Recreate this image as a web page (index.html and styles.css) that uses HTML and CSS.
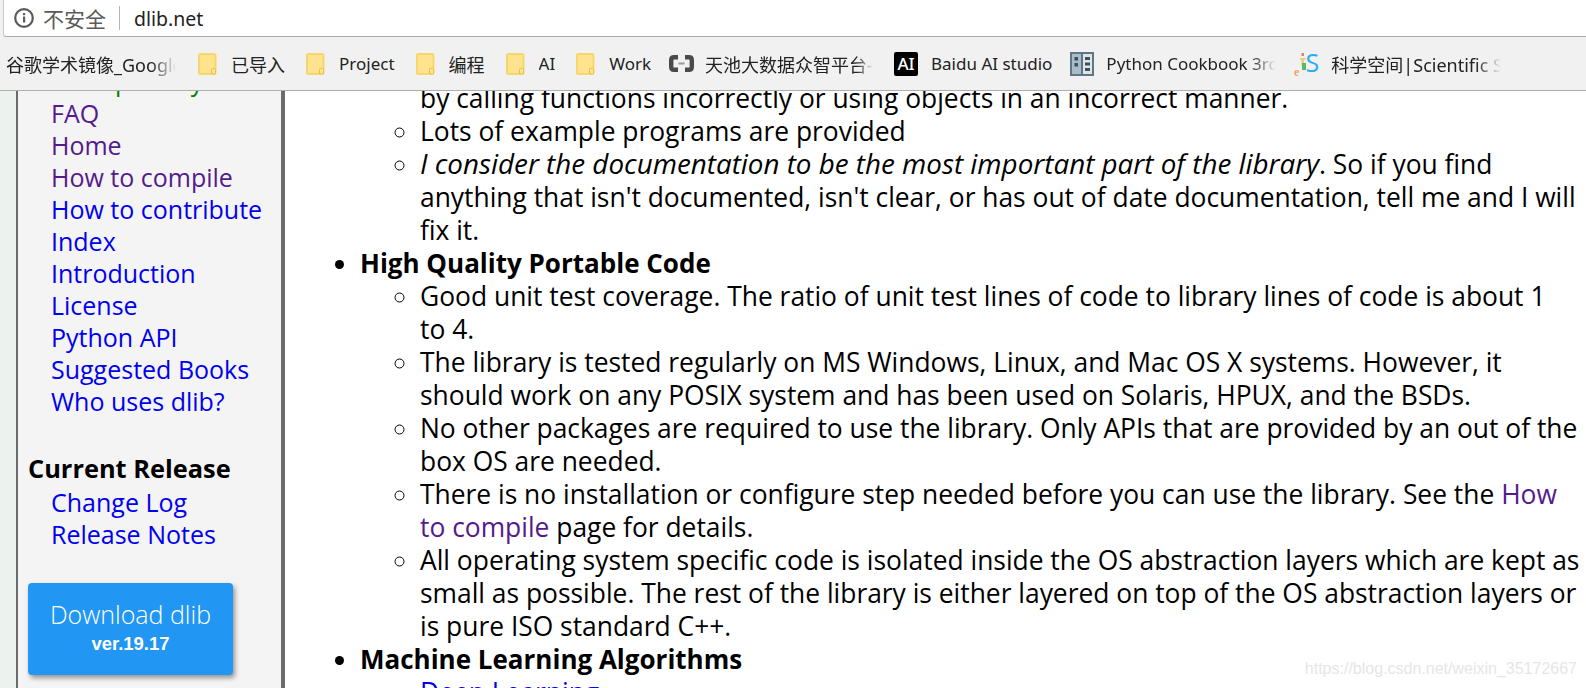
FILE: index.html
```html
<!DOCTYPE html>
<html lang="en">
<head>
<meta charset="utf-8">
<title>dlib C++ Library</title>
<link rel="stylesheet" href="styles.css">
</head>
<body>
<header class="chrome">
  <div class="addressbar">
    <svg class="info" width="20" height="20" viewBox="0 0 20 20"><circle cx="10" cy="10" r="8.8" fill="none" stroke="#5a5a5a" stroke-width="2.2"/><rect x="9" y="8.500" width="2.200" height="6" fill="#5a5a5a"/><rect x="9" y="5" width="2.200" height="2.200" fill="#5a5a5a"/></svg>
    <span class="insecure">不安全</span>
    <span class="sep"></span>
    <span class="url">dlib.net</span>
  </div>
  <nav class="bookmarks">
    <span class="bm bm-first"><span class="bm-text cjk w170">谷歌学术镜像_Google</span></span>
    <span class="bm"><svg class="folder" width="19" height="22" viewBox="0 0 19 22"><use href="#fld"/></svg><span class="bm-text cjk">已导入</span></span>
    <span class="bm"><svg class="folder" width="19" height="22" viewBox="0 0 19 22"><use href="#fld"/></svg><span class="bm-text">Project</span></span>
    <span class="bm"><svg class="folder" width="19" height="22" viewBox="0 0 19 22"><use href="#fld"/></svg><span class="bm-text cjk">编程</span></span>
    <span class="bm"><svg class="folder" width="19" height="22" viewBox="0 0 19 22"><use href="#fld"/></svg><span class="bm-text">AI</span></span>
    <span class="bm bm-tight"><svg class="folder" width="19" height="22" viewBox="0 0 19 22"><use href="#fld"/></svg><span class="bm-text">Work</span></span>
    <span class="bm"><svg class="fav fav-tc" width="25" height="17" viewBox="0 0 25 17"><path d="M9 2.200H5Q2.200 2.200 2.200 5V12Q2.200 14.800 5 14.800H9M16 2.200H20Q22.800 2.200 22.800 5V12Q22.800 14.800 20 14.800H16" fill="none" stroke="#4a4a4a" stroke-width="4.400"/><rect x="9.500" y="7.500" width="6" height="2" fill="#9a9a9a"/></svg><span class="bm-text cjk w168">天池大数据众智平台-</span></span>
    <span class="bm bm-tight"><span class="ai-logo">AI</span><span class="bm-text">Baidu AI studio</span></span>
    <span class="bm bm-tight"><svg class="fav" width="24" height="24" viewBox="0 0 24 24"><rect width="24" height="24" fill="#5f7684"/><rect x="2" y="2" width="9" height="20" fill="#a9bcc7"/><rect x="13" y="2" width="9" height="20" fill="#dfe6ea"/><rect x="4.500" y="5" width="3.500" height="3.500" fill="#3f4f5a"/><rect x="4.500" y="11" width="3.500" height="3.500" fill="#3f4f5a"/><rect x="15" y="5" width="5" height="3" fill="#3f4f5a"/><rect x="15" y="10.500" width="5" height="3" fill="#3f4f5a"/><rect x="15" y="16" width="5" height="3" fill="#3f4f5a"/></svg><span class="bm-text w170">Python Cookbook 3rd</span></span>
    <span class="bm"><svg class="fav" width="25" height="24" viewBox="0 0 25 24"><rect x="7.500" y="1" width="2.500" height="3" fill="#e0807a"/><rect x="6" y="6" width="5.500" height="2" fill="#e8cf7c"/><rect x="7.500" y="8" width="2.500" height="6" fill="#e8cf7c"/><rect x="8" y="11" width="4" height="7" fill="#5cb85c"/><text x="11.500" y="19.500" class="js-s">S</text><text x="0" y="23.500" class="js-e">e</text></svg><span class="bm-text cjk w170">科学空间|Scientific Spaces</span></span>
  </nav>
</header>

<div class="page">
  <aside class="sidebar">
    <div class="side-scroll">
      <ul class="side-list">
        <li><a href="#">Examples: C++</a></li>
        <li><a class="green" href="#">Examples: Python</a></li>
        <li><a class="visited" href="#">FAQ</a></li>
        <li><a class="visited" href="#">Home</a></li>
        <li><a class="visited" href="#">How to compile</a></li>
        <li><a href="#">How to contribute</a></li>
        <li><a href="#">Index</a></li>
        <li><a href="#">Introduction</a></li>
        <li><a href="#">License</a></li>
        <li><a href="#">Python API</a></li>
        <li><a href="#">Suggested Books</a></li>
        <li><a href="#">Who uses dlib?</a></li>
      </ul>
      <h3 class="side-head">Current Release</h3>
      <ul class="side-list">
        <li><a href="#">Change Log</a></li>
        <li><a href="#">Release Notes</a></li>
      </ul>
      <a class="download" href="#"><span class="dl-main">Download dlib</span><span class="dl-ver">ver.19.17</span></a>
    </div>
  </aside>
  <main class="content">
    <ul class="outer">
      <li class="section-tail">
        <ul class="inner">
          <li>The library is easy to debug. Assertions are used to catch errors caused<br>by calling functions incorrectly or using objects in an incorrect manner.</li>
          <li>Lots of example programs are provided</li>
          <li><em>I consider the documentation to be the most important part of the library</em>. So if you find anything that isn't documented, isn't clear, or has out of date documentation, tell me and I will fix it.</li>
        </ul>
      </li>
      <li><b>High Quality Portable Code</b>
        <ul class="inner">
          <li>Good unit test coverage. The ratio of unit test lines of code to library lines of code is about 1 to&nbsp;4.</li>
          <li>The library is tested regularly on MS Windows, Linux, and Mac OS X systems. However, it should work on any POSIX system and has been used on Solaris, HPUX, and the BSDs.</li>
          <li>No other packages are required to use the library. Only APIs that are provided by an out of the box OS are needed.</li>
          <li>There is no installation or configure step needed before you can use the library. See the <a class="visited" href="#">How to compile</a> page for details.</li>
          <li>All operating system specific code is isolated inside the OS abstraction layers which are kept as small as possible. The rest of the library is either layered on top of the OS abstraction layers or is pure ISO standard C++.</li>
        </ul>
      </li>
      <li><b>Machine Learning Algorithms</b>
        <ul class="inner">
          <li><a href="#">Deep Learning</a></li>
        </ul>
      </li>
    </ul>
  </main>
</div>
<div class="watermark">https://blog.csdn.net/weixin_35172667</div>
<svg class="defs" width="0" height="0"><symbol id="fld" viewBox="0 0 19 22"><rect x="1" y="1" width="16.500" height="20" rx="1.500" fill="#ffe38f" stroke="#f7d76c" stroke-width="2"/><rect x="13.500" y="15.500" width="4" height="5.500" rx="1" fill="#ffe38f" stroke="#e6c04f" stroke-width="1"/></symbol></svg>
</body>
</html>
```
FILE: styles.css
```css
* { box-sizing: border-box; }
html, body { margin: 0; padding: 0; height: 688px; overflow: hidden; background: #ecf3ee; }
body { font-family: "Open Sans", "Noto Sans CJK SC", sans-serif; color: #000; position: relative; }
a { color: #0000ee; text-decoration: none; }
a.visited { color: #551a8b; }
a.green { color: #008000; }
.defs { position: absolute; }

.chrome { height: 91px; background: #f1f1f1; border-bottom: 1px solid #aeaeae; }
.addressbar { height: 37px; background: #fff; border-bottom: 1px solid #a9a9a9; border-left: 1px solid #c9c9c9; margin-left: 3px; border-bottom-left-radius: 3px; display: flex; align-items: center; padding-left: 10px; }
.info { flex: none; }
.insecure { font-size: 21px; color: #5a5a5a; margin-left: 9px; font-family: "Noto Sans CJK SC", sans-serif; }
.sep { width: 1px; height: 24px; background: #b5b5b5; margin: 0 14px 0 13px; }
.url { font-size: 19.5px; color: #222; font-family: "Noto Sans", sans-serif; }

.bookmarks { height: 53px; display: flex; align-items: center; padding-left: 6px; }
.bm { display: flex; align-items: center; flex: none; margin-right: 21px; }
.bm-first { margin-right: 22px; }
.bm-tight { margin-right: 18px; }
.folder { flex: none; margin-right: 14px; }
.fav { flex: none; margin-right: 12px; }
.fav-tc { margin-right: 11px; }
.bm-text { font-size: 17px; color: #222; white-space: nowrap; font-family: "Noto Sans", "Noto Sans CJK SC", sans-serif; overflow: hidden; }
.cjk { font-size: 18px; }
.w170 { width: 170px; -webkit-mask-image: linear-gradient(to right, #000 85%, transparent); mask-image: linear-gradient(to right, #000 85%, transparent); }
.w168 { width: 168px; -webkit-mask-image: linear-gradient(to right, #000 90%, transparent); mask-image: linear-gradient(to right, #000 90%, transparent); }
.ai-logo { flex: none; width: 24px; height: 24px; border-radius: 2px; background: #000; color: #fff; font-size: 17px; font-weight: 500; display: flex; align-items: center; justify-content: center; margin-right: 13px; font-family: "Noto Sans", sans-serif; }
.js-s { font: 400 25px "Open Sans", sans-serif; fill: #27aef5; }
.js-e { font: 700 12px "Liberation Serif", serif; fill: #e8a850; }

.page { height: 597px; display: flex; overflow: hidden; font-size: 25px; line-height: 32px; }
.sidebar { width: 269px; flex: none; margin-left: 16px; background: #f4f4f4; border-left: 2px solid #6b6b6b; border-right: 4px solid #6b6b6b; overflow: hidden; }
.side-scroll { margin-top: -58px; padding-left: 10px; }
.side-list { list-style: none; margin: 0; padding: 0 0 0 23px; }
.side-head { font-size: 25.4px; line-height: 32px; font-weight: 700; margin: 35px 0 2px; }
.download { display: flex; flex-direction: column; align-items: center; width: 205px; height: 92px; margin-top: 33px; border-radius: 4px; background: #2196f3; color: #fff; box-shadow: 2px 3px 5px rgba(0,0,0,.4); padding-top: 15px; }
.dl-main { font-size: 25px; line-height: 32px; font-weight: 300; font-family: "Open Sans", sans-serif; }
.dl-ver { font-size: 18.5px; line-height: 27px; font-weight: 700; font-family: "Liberation Sans", sans-serif; }

.content { flex: 1; overflow: hidden; background: #fff; font-size: 26.4px; }
.outer { margin: -42px 0 0; padding: 0 0 0 75px; line-height: 33px; }
.outer b { font-size: 26px; }
.outer em { font-size: 27.8px; line-height: 0; }
.inner { margin: 0; padding: 0 6px 0 60px; list-style: circle; }
.watermark { position: absolute; right: 9px; bottom: 10px; font: 16px "Liberation Sans", sans-serif; color: #e6e6e6; }
```
